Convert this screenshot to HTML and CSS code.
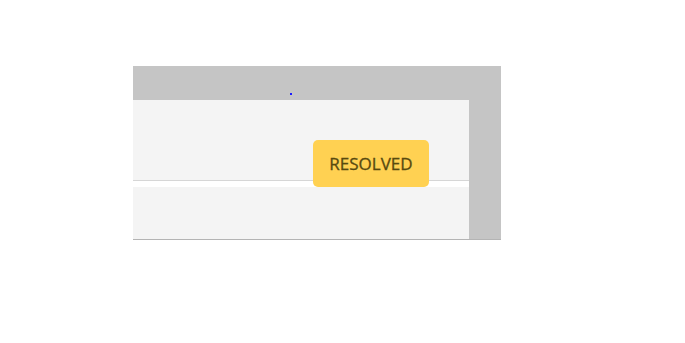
FILE: index.html
```html
<!DOCTYPE html>
<html>
<head>
<meta charset="utf-8">
<link rel="stylesheet" href="styles.css">
</head>
<body>
<div class="stage">
  <div class="frame">
    <span class="dot"></span>
    <div class="panel">
      <div class="panel-top"></div>
      <div class="panel-gap"></div>
      <div class="panel-bottom"></div>
    </div>
    <div class="badge">RESOLVED</div>
  </div>
</div>
</body>
</html>
```

FILE: styles.css
```css
html, body {
  margin: 0;
  padding: 0;
  background: #ffffff;
}
.stage {
  padding: 66px 0 0 133px;
}
.frame {
  position: relative;
  width: 336px;
  height: 139px;
  background: #c5c5c5;
  border-bottom: 1px solid #b4b4b4;
  padding: 34px 32px 0 0;
  display: flex;
  flex-direction: column;
}
.panel {
  display: flex;
  flex-direction: column;
  flex: 1;
}
.panel-top {
  height: 80px;
  background: #f4f4f4;
  border-bottom: 1px solid #d6d6d6;
}
.panel-gap {
  height: 6px;
  background: #ffffff;
}
.panel-bottom {
  flex: 1;
  background: #f4f4f4;
}
.dot {
  position: absolute;
  left: 157px;
  top: 27px;
  width: 2px;
  height: 2px;
  background: #1a1aff;
}
.badge {
  position: absolute;
  left: 180px;
  top: 74px;
  width: 116px;
  height: 47px;
  box-sizing: border-box;
  display: flex;
  align-items: center;
  justify-content: center;
  background: #ffd152;
  border-radius: 5px;
  color: #574a10;
  font-family: "Open Sans", "Noto Sans", sans-serif;
  font-size: 17px;
  font-weight: 500;
  -webkit-text-stroke: 0.3px #574a10;
}
```
